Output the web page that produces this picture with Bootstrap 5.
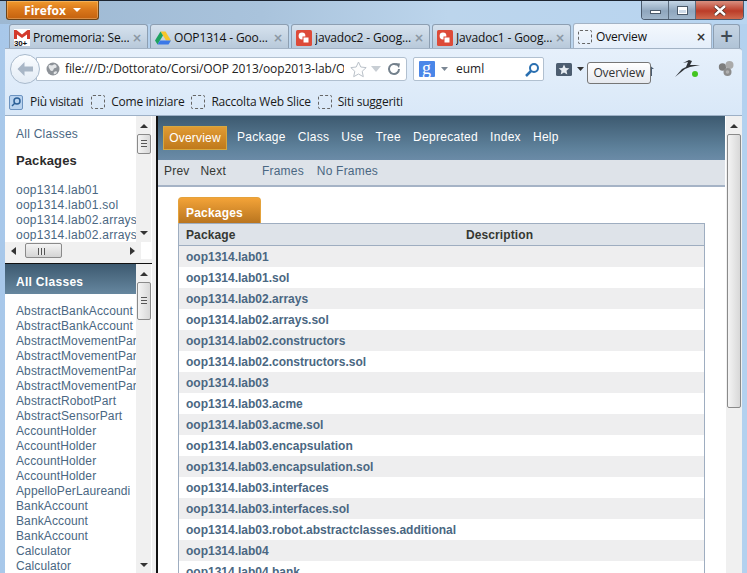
<!DOCTYPE html>
<html lang="en">
<head>
<meta charset="utf-8">
<title>Overview</title>
<link href="https://cdn.jsdelivr.net/npm/bootstrap@5.3.0/dist/css/bootstrap.min.css" rel="stylesheet">
<style>
html,body{margin:0;padding:0;background:#b4d0ec;overflow:hidden}
.win{position:relative;width:747px;height:573px;overflow:hidden;border-top:1px solid #1c2430;
 background:linear-gradient(90deg,#a8c8ea 0,#b9d4ee 30%,#c2d9ef 60%,#b3d1ef 100%);font-family:"Open Sans","Noto Sans",sans-serif;color:#1a1a1a}
.titlebar{height:23px;flex:none;background:linear-gradient(90deg,#9db8d2,#a9c3dc 35%,#bcd5ec 60%,#b8d5f1)}
.ffbtn{width:93px;height:19px;margin-left:6px;background:linear-gradient(#f09a2e,#d9761a 50%,#c4620f);border:1px solid #6c4417;border-top:0;border-radius:0 0 3px 3px;color:#fff;font:700 12px "Open Sans",sans-serif;gap:7px;box-shadow:inset 0 0 0 1px rgba(255,220,170,.35)}
.ffcaret{width:0;height:0;border:4px solid transparent;border-top:4px solid #fff;border-bottom:0}
.winbtns{margin-right:3px;height:19px;border:1px solid #4a5a6c;border-top:0;border-radius:0 0 4px 4px;overflow:hidden}
.wb{width:27px;background:linear-gradient(#c5d6e6,#8fa6bd 55%,#a0b6cb);border-right:1px solid #5a6b7d}
.wb.cl{width:47px;border-right:0;background:linear-gradient(#d99080,#bb3c28 55%,#cf6a4e);color:#fff}
.wb i{display:block}
.wmin{width:11px;height:4px;background:#fff;border:1px solid #4b5a6a;margin-top:9px}
.wmax{width:11px;height:9px;border:1px solid #4b5a6a;background:#cfdcea;box-shadow:inset 0 0 0 1px #fff,inset 0 2px 0 1px #fff}
.tabstrip{height:24px;flex:none;padding-left:9px;gap:2px}
.tabx{width:139px;height:24px;border:1px solid #8d9fb2;border-bottom:0;border-radius:3px 3px 0 0;background:linear-gradient(#d6e2ee,#b8c9da);font-size:12px;letter-spacing:-.15px;padding:2px 3px 0 4px;gap:3px;color:#111;white-space:nowrap;overflow:hidden}
.tabx.act{background:linear-gradient(#f4f8fd,#e4eefa);border-color:#a3b3c5;height:25px;position:relative;z-index:2}
.tabx .lbl{flex:1;overflow:hidden}
.tabx .xx{color:#8b97a3;font:700 12px "DejaVu Sans",sans-serif;margin-right:2px;letter-spacing:0}
.tabx.act .xx{color:#333}
.plus{width:27px;height:24px;margin-left:-1px;border:1px solid #8d9fb2;border-bottom:0;border-radius:3px 3px 0 0;background:linear-gradient(#c6d5e4,#b0c3d6);font:700 17px "DejaVu Sans",sans-serif;color:#3f4a55;line-height:1}
.chrome{margin:0 5px;flex:1;min-height:0}
.tools{height:68px;flex:none;background:linear-gradient(#e6f0fb,#d9e8f8);border-top:1px solid #a3b3c5;border-bottom:1px solid #9db0c6;border-radius:0 3px 0 0}
.navrow{height:40px;padding-left:5px}
.backb{width:30px;height:30px;flex:none;border-radius:50%;background:linear-gradient(#fbfdff,#e2ebf5);border:1px solid #a9bacc;position:relative;z-index:2;margin-right:-4px}
.urlbar{width:371px;flex:none;height:24px;background:#fff;border:1px solid #b1c0d0;border-radius:0 3px 3px 0;padding-left:0;font-size:12px;letter-spacing:-.12px;gap:0;white-space:nowrap;overflow:hidden}
.urltxt{width:279px;flex:none;overflow:hidden;color:#222;margin-left:5px}
.searchbar{width:131px;flex:none;height:24px;background:#fff;border:1px solid #b1c0d0;border-radius:2px;margin-left:6px;padding:0 3px 0 5px;font-size:12px;gap:3px;color:#222}
.bmrow{height:26px;padding-left:4px;font-size:12px;letter-spacing:-.22px;color:#1a1a1a;white-space:nowrap}
.bmph{display:inline-block;width:14px;height:14px;border:1px dashed #666;border-radius:2px}
.bmrow .bmph{margin-right:6px}
.bm1{margin:0 8px 0 7px;letter-spacing:-.3px}
.bm2{margin-right:7px}
.bm3{margin-right:7px}
.tabph{margin:0 1px 0 0}
.view{height:458px;background:#f0f0f0}
.leftfr{width:147px;background:#fff;flex:none}
.fr{position:relative;overflow:hidden;font:12px "Liberation Sans",Arial,sans-serif;color:#4a6782;background:#fff}
.fr1{height:143px;flex:none}
.fr1c{padding:11px 0 0 11px;height:125px;width:131px;overflow:hidden;white-space:nowrap;letter-spacing:.25px}
.fr1c h6{font:700 13px "Liberation Sans",Arial,sans-serif;color:#2c2c2c;margin:12px 0 0;letter-spacing:.1px}
.lst{line-height:15px}
.fr1c .lst{margin-top:15px}
.divd{height:5px;flex:none;background:#f0f0f0;border-bottom:1px solid #111}
.fr2{flex:1}
.fr2 .hd{width:131px;height:30px;background:linear-gradient(#3d5a70,#66879f);color:#fff;font-weight:700;font-size:12px;letter-spacing:.3px;padding:5px 0 0 11px;display:flex;align-items:center}
.fr2c{width:131px;overflow:hidden;white-space:nowrap;padding:10px 0 0 11px;letter-spacing:.12px}
.vs{position:absolute;top:0;right:1px;bottom:0;width:15px;background:#f0f0f0}
.vs.vsup{bottom:17px}
.vs.vsm{right:0;width:16px}
.vs .tri{position:absolute;left:4px;width:0;height:0;border:4px solid transparent}
.up{top:8px;border-bottom:4px solid #333!important;border-top:0!important}
.dn{bottom:7px;border-top:4px solid #333!important;border-bottom:0!important}
.thumb{position:absolute;left:1px;top:18px;width:14px;background:linear-gradient(90deg,#f4f4f4,#d8d8d8);border:1px solid #8a8a8a;border-radius:2px}
.th1{height:20px}.th2{height:38px}.th3{height:274px}
.grip{position:absolute;left:3px;right:3px;top:50%;height:7px;margin-top:-4px;background:repeating-linear-gradient(#555 0 1px,#e8e8e8 1px 3px)}
.hs{position:absolute;left:0;bottom:0;width:136px;height:17px;background:#f0f0f0}
.hs .thumbh{position:absolute;left:20px;top:1px;width:37px;height:15px;background:linear-gradient(#f4f4f4,#d4d4d4);border:1px solid #8a8a8a;border-radius:2px}
.hs .gr{position:absolute;left:12px;top:4px;width:7px;height:7px;background:repeating-linear-gradient(90deg,#555 0 1px,#e8e8e8 1px 3px)}
.hl,.hr{position:absolute;top:5px}
.hl{left:6px}.hr{right:5px}
.sep{width:6px;flex:none;background:#f0f0f0;border-right:2px solid #111}
.mainfr{flex:1;min-width:0;position:relative;overflow:hidden;background:#fff;font:12px "Liberation Sans",Arial,sans-serif}
.mainc{width:567px}
.topnv{height:44px;background:linear-gradient(#3d5a70 0,#5f829c 75%,#6b8ba7);padding:10px 0 0 5px;color:#fff;letter-spacing:.3px;gap:12px}
.topnv .nvl{margin-top:4px}
.ovw{height:24px;width:64px;background:linear-gradient(#e09b33,#c07a1c);border:1px solid #d8a83f;margin-right:-2px;color:#fff;letter-spacing:.2px}
.subnv{height:27px;background:#dee3e9;border-bottom:2px solid #a5b3c6;padding:0 0 3px 6px;color:#353833;letter-spacing:.2px}
.subnv .ln{color:#4a6782}
.snext{margin-left:11px}.sfr{margin-left:36px}.snof{margin-left:13px}
.tabcap{margin:10px 0 0 20px;width:83px;height:26px;background:linear-gradient(#f3a338,#b9751f);border:1px solid #e4a23b;border-bottom:0;border-radius:4px 4px 0 0;color:#fff;font-weight:700;padding:5px 0 0 7px;letter-spacing:.2px;line-height:20px}
.pkgtb{margin-left:20px;width:527px;border-collapse:separate;border-spacing:0;border-top:1px solid #9eadc0;border-left:1px solid #9eadc0;border-right:1px solid #9eadc0;table-layout:fixed}
.pkgtb th{height:22px;padding:0 0 0 7px;background:#dee3e9;color:#353833;font-weight:700;border-bottom:1px solid #9eadc0;letter-spacing:.1px}
.pkgtb th:first-child{width:280px}
.pkgtb td{height:21px;padding:0 0 0 7px;color:#4a6782;font-weight:700;white-space:nowrap;overflow:visible}
.pkgtb tr:nth-child(odd) td{background:#eeeeef}
.pkgtb tr:nth-child(even) td{background:#fff}
.tip{position:absolute;left:587px;top:61px;width:64px;height:22px;background:linear-gradient(#fff,#e6e9ef);border:1px solid #767676;border-radius:3px;font-size:12px;letter-spacing:-.1px;color:#333;z-index:5}
.ricon{flex:none}
.i-globe{margin-left:9px}
.i-star{margin-left:6px}
.i-drop{margin-left:3px}
.i-rel{margin-left:5px}
.i-gd{margin:0 5px 0 3px}
.i-bm{margin-left:12px}
.i-bd{margin-left:5px}
.i-home{margin-left:53px}
.i-run{margin-left:20px}
.i-gr{margin-left:17px}
</style>
</head>
<body>
<div class="win d-flex flex-column">
  <div class="titlebar d-flex justify-content-between align-items-start">
    <div class="ffbtn d-flex align-items-center justify-content-center">Firefox<span class="ffcaret"></span></div>
    <div class="winbtns d-flex">
      <div class="wb d-flex justify-content-center"><i class="wmin"></i></div>
      <div class="wb d-flex justify-content-center align-items-center"><i class="wmax"></i></div>
      <div class="wb cl d-flex justify-content-center align-items-center">
        <svg width="14" height="11" viewBox="0 0 14 11"><path d="M2 1l10 9M12 1L2 10" stroke="#4a2a22" stroke-width="4"/><path d="M2 1l10 9M12 1L2 10" stroke="#fff" stroke-width="2.4"/></svg>
      </div>
    </div>
  </div>
  <div class="tabstrip d-flex align-items-end">
    <div class="tabx d-flex align-items-center">
      <svg class="ricon" width="16" height="17" viewBox="0 0 16 17"><rect width="16" height="10" fill="#fff"/><path d="M0 1h2.500L8 5.500 13.500 1H16v9h-3V5.500L8 9 3 5.500V10H0z" fill="#d33a2c"/><rect y="10" width="16" height="7" fill="#fff"/><text x="0" y="16.500" font-family="Liberation Sans" font-size="8" font-weight="700" fill="#111">30+</text></svg>
      <span class="lbl">Promemoria: Se...</span><span class="xx">×</span>
    </div>
    <div class="tabx d-flex align-items-center">
      <svg class="ricon" width="16" height="16" viewBox="0 0 16 16"><path d="M5.500 1.500h5L16 10.500h-5z" fill="#f6c52b"/><path d="M5.500 1.500L0 10.500l2.500 4L8 5.500z" fill="#1da261"/><path d="M2.500 14.500h11l2.500-4H5z" fill="#3b78e7"/></svg>
      <span class="lbl">OOP1314 - Goo...</span><span class="xx">×</span>
    </div>
    <div class="tabx d-flex align-items-center">
      <svg class="ricon" width="16" height="16" viewBox="0 0 16 16"><rect width="16" height="16" rx="1.500" fill="#dd4b39"/><circle cx="6" cy="6" r="3.400" fill="#fff"/><rect x="7" y="7" width="6" height="6" fill="#fff" stroke="#dd4b39"/></svg>
      <span class="lbl">javadoc2 - Goog...</span><span class="xx">×</span>
    </div>
    <div class="tabx d-flex align-items-center">
      <svg class="ricon" width="16" height="16" viewBox="0 0 16 16"><rect width="16" height="16" rx="1.500" fill="#dd4b39"/><circle cx="6" cy="6" r="3.400" fill="#fff"/><rect x="7" y="7" width="6" height="6" fill="#fff" stroke="#dd4b39"/></svg>
      <span class="lbl">Javadoc1 - Goog...</span><span class="xx">×</span>
    </div>
    <div class="tabx act d-flex align-items-center">
      <span class="bmph ricon tabph"></span>
      <span class="lbl">Overview</span><span class="xx">×</span>
    </div>
    <div class="plus d-flex align-items-center justify-content-center">+</div>
  </div>
  <div class="chrome d-flex flex-column">
    <div class="tools d-flex flex-column">
      <div class="navrow d-flex align-items-center">
        <div class="backb d-flex align-items-center justify-content-center">
          <svg width="16" height="14" viewBox="0 0 16 14"><path d="M7.500 0L.5 7l7 7V9.500H16v-5H7.500z" fill="#a8b6c6"/></svg>
        </div>
        <div class="urlbar d-flex align-items-center">
          <svg class="ricon i-globe" width="14" height="14" viewBox="0 0 14 14"><circle cx="7" cy="7" r="6.500" fill="#8d9298"/><path d="M3 3c2 0 3 1 4 0s2-1 3 0 1 3-1 3-1 3-3 3-2-2-3-3 0-3 0-3zM8 10c1-1 3-1 3 0s-2 3-3 2 0-2 0-2z" fill="#e4e6e8"/></svg>
          <span class="urltxt">file:///D:/Dottorato/Corsi/OOP 2013/oop2013-lab/OOP</span>
          <svg class="ricon i-star" width="17" height="17" viewBox="0 0 17 17"><path d="M8.500 1l2.300 5 5.400.6-4 3.700 1.100 5.400-4.800-2.700-4.800 2.700 1.100-5.400-4-3.700 5.400-.6z" fill="#fdfdfd" stroke="#b9c0c8"/></svg>
          <svg class="ricon i-drop" width="12" height="8" viewBox="0 0 12 8"><path d="M1 1h10L6 7z" fill="#c8ced4"/></svg>
          <svg class="ricon i-rel" width="14" height="14" viewBox="0 0 14 14"><path d="M12 7a5 5 0 1 1-2-4" fill="none" stroke="#73808c" stroke-width="2"/><path d="M8 1l5 .5-1 4.500z" fill="#73808c"/></svg>
        </div>
        <div class="searchbar d-flex align-items-center">
          <svg class="ricon" width="16" height="16" viewBox="0 0 16 16"><rect width="16" height="16" rx="1" fill="#4a86e8"/><text x="3" y="12.500" font-family="Liberation Serif" font-size="18" fill="#fff">g</text></svg>
          <svg class="ricon i-gd" width="7" height="4" viewBox="0 0 7 4"><path d="M0 0h7L3.500 4z" fill="#7b8794"/></svg>
          <span class="flex-grow-1">euml</span>
          <svg class="ricon" width="15" height="15" viewBox="0 0 15 15"><circle cx="9" cy="6" r="4" fill="none" stroke="#2a6fb0" stroke-width="2"/><path d="M6 9l-5 5" stroke="#2a6fb0" stroke-width="2.500"/></svg>
        </div>
        <svg class="ricon i-bm" width="16" height="13" viewBox="0 0 16 13"><rect width="16" height="13" rx="1.500" fill="#4c5d70"/><path d="M8 1.500l1.600 3.400 3.700.4-2.800 2.500.8 3.600L8 9.600l-3.300 1.800.8-3.600-2.800-2.500 3.700-.4z" fill="#e6ecf2"/></svg>
        <svg class="ricon i-bd" width="7" height="4" viewBox="0 0 7 4"><path d="M0 0h7L3.500 4z" fill="#333"/></svg>
        <svg class="ricon i-home" width="18" height="16" viewBox="0 0 18 16"><path d="M9 1l8 7h-2v7H3V8H1z" fill="#4c5d70"/></svg>
        <svg class="ricon i-run" width="26" height="20" viewBox="0 0 26 20"><path d="M0 18L7 10l4-2 2-5-5 1 6-3 3 1-2 4 10 0-10 2-5 2z" fill="#2f3338"/><circle cx="20" cy="15" r="3" fill="#43c520"/></svg>
        <svg class="ricon i-gr" width="18" height="18" viewBox="0 0 18 18"><circle cx="4.500" cy="7" r="3.700" fill="#7d7d7d"/><circle cx="11.500" cy="5" r="4" fill="#aaa"/><circle cx="9.500" cy="12" r="4" fill="#8c8c8c"/><circle cx="9.500" cy="12" r="1.800" fill="#b0b0b0"/></svg>
      </div>
      <div class="bmrow d-flex align-items-center">
        <svg class="ricon" width="14" height="15" viewBox="0 0 14 15"><rect x=".5" y=".5" width="13" height="14" rx="1.500" fill="#b9d3ef" stroke="#6c93c0"/><circle cx="8" cy="6" r="3" fill="none" stroke="#2b5f96" stroke-width="1.500"/><path d="M6 8l-3 3" stroke="#2b5f96" stroke-width="1.500"/></svg>
        <span class="bm1">Più visitati</span>
        <span class="bmph"></span><span class="bm2">Come iniziare</span>
        <span class="bmph"></span><span class="bm3">Raccolta Web Slice</span>
        <span class="bmph"></span><span>Siti suggeriti</span>
      </div>
    </div>
    <div class="view d-flex">
      <div class="leftfr d-flex flex-column">
        <div class="fr fr1">
          <div class="fr1c">
            <div>All Classes</div>
            <h6>Packages</h6>
            <div class="lst">
              <div>oop1314.lab01</div><div>oop1314.lab01.sol</div><div>oop1314.lab02.arrays</div><div>oop1314.lab02.arrays.sol</div><div>oop1314.lab02.constructors</div>
            </div>
          </div>
          <div class="vs vsup"><span class="tri up"></span><div class="thumb th1"><span class="grip"></span></div><span class="tri dn"></span></div>
          <div class="hs">
            <svg class="hl" width="6" height="8" viewBox="0 0 6 8"><path d="M5 0v8L0 4z" fill="#333"/></svg>
            <div class="thumbh"><span class="gr"></span></div>
            <svg class="hr" width="6" height="8" viewBox="0 0 6 8"><path d="M0 0v8l5-4z" fill="#333"/></svg>
          </div>
        </div>
        <div class="divd"></div>
        <div class="fr fr2">
          <div class="hd">All Classes</div>
          <div class="fr2c lst">
            <div>AbstractBankAccount</div><div>AbstractBankAccount</div><div>AbstractMovementPart</div><div>AbstractMovementPart</div><div>AbstractMovementPart</div><div>AbstractMovementPart</div><div>AbstractRobotPart</div><div>AbstractSensorPart</div><div>AccountHolder</div><div>AccountHolder</div><div>AccountHolder</div><div>AccountHolder</div><div>AppelloPerLaureandi</div><div>BankAccount</div><div>BankAccount</div><div>BankAccount</div><div>Calculator</div><div>Calculator</div>
          </div>
          <div class="vs"><span class="tri up"></span><div class="thumb th2"><span class="grip"></span></div><span class="tri dn"></span></div>
        </div>
      </div>
      <div class="sep"></div>
      <div class="mainfr">
        <div class="mainc">
          <div class="topnv d-flex align-items-start">
            <div class="ovw d-flex align-items-center justify-content-center">Overview</div>
            <span class="nvl">Package</span><span class="nvl">Class</span><span class="nvl">Use</span><span class="nvl">Tree</span><span class="nvl">Deprecated</span><span class="nvl">Index</span><span class="nvl">Help</span>
          </div>
          <div class="subnv d-flex align-items-center">
            <span>Prev</span><span class="snext">Next</span><span class="ln sfr">Frames</span><span class="ln snof">No Frames</span>
          </div>
          <div class="tabcap">Packages</div>
          <table class="pkgtb">
            <thead><tr><th>Package</th><th>Description</th></tr></thead>
            <tbody>
              <tr><td colspan="2">oop1314.lab01</td></tr>
              <tr><td colspan="2">oop1314.lab01.sol</td></tr>
              <tr><td colspan="2">oop1314.lab02.arrays</td></tr>
              <tr><td colspan="2">oop1314.lab02.arrays.sol</td></tr>
              <tr><td colspan="2">oop1314.lab02.constructors</td></tr>
              <tr><td colspan="2">oop1314.lab02.constructors.sol</td></tr>
              <tr><td colspan="2">oop1314.lab03</td></tr>
              <tr><td colspan="2">oop1314.lab03.acme</td></tr>
              <tr><td colspan="2">oop1314.lab03.acme.sol</td></tr>
              <tr><td colspan="2">oop1314.lab03.encapsulation</td></tr>
              <tr><td colspan="2">oop1314.lab03.encapsulation.sol</td></tr>
              <tr><td colspan="2">oop1314.lab03.interfaces</td></tr>
              <tr><td colspan="2">oop1314.lab03.interfaces.sol</td></tr>
              <tr><td colspan="2">oop1314.lab03.robot.abstractclasses.additional</td></tr>
              <tr><td colspan="2">oop1314.lab04</td></tr>
              <tr><td colspan="2">oop1314.lab04.bank</td></tr>
            </tbody>
          </table>
        </div>
        <div class="vs vsm"><span class="tri up"></span><div class="thumb th3"></div></div>
      </div>
    </div>
  </div>
  <div class="tip d-flex align-items-center justify-content-center">Overview</div>
</div>
<script src="https://cdn.jsdelivr.net/npm/bootstrap@5.3.0/dist/js/bootstrap.bundle.min.js"></script>
</body>
</html>
